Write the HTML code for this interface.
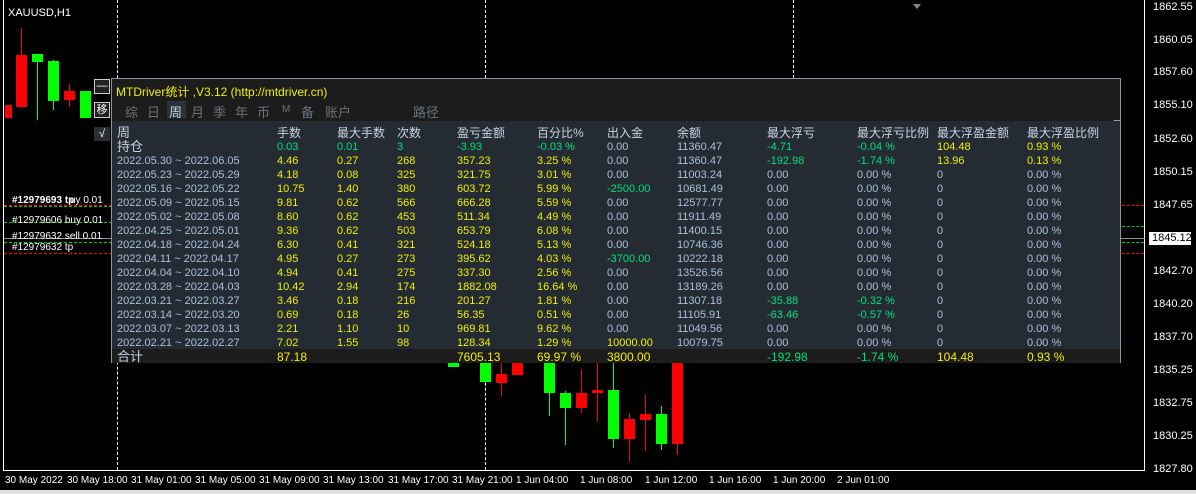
<!DOCTYPE html><html><head><meta charset="utf-8"><style>
*{margin:0;padding:0;box-sizing:border-box}
body{width:1196px;height:494px;background:#000;position:relative;overflow:hidden;font-family:"Liberation Sans","Noto Sans CJK SC",sans-serif;color:#fff}
.a{position:absolute}
.pl{position:absolute;left:1153px;font-size:11px;color:#fff}
.tl{position:absolute;top:475px;font-size:10px;color:#fff}
.c{position:absolute}
.panel{position:absolute;left:111px;top:78px;width:1010px;height:285px;background:#1c1c1c;border:1px solid #8a94a0}
.tbl{position:absolute;left:0;top:42px;width:1008px;height:228px;background:#252b33}
.r{position:absolute;left:0;height:14px;font-size:11px;line-height:14px;white-space:nowrap}
.r span{position:absolute}
.w{color:#c8d4e4}.y{color:#f0f000}.g{color:#00e07a}.b{color:#a8c0e0}
</style></head><body>
<div class="a" style="left:3px;top:0;width:1px;height:470px;background:#fff"></div>
<div class="a" style="left:3px;top:470px;width:1142px;height:1px;background:#fff"></div>
<div class="a" style="left:1144px;top:0;width:1px;height:471px;background:#fff"></div>
<div class="a" style="left:0;top:490px;width:1196px;height:4px;background:#e0e0e0"></div>
<div class="a" style="left:117px;top:0;height:470px;border-left:1px dashed #fff"></div>
<div class="a" style="left:485px;top:0;height:78px;border-left:1px dashed #fff"></div>
<div class="a" style="left:485px;top:363px;height:107px;border-left:1px dashed #fff"></div>
<div class="a" style="left:793px;top:0;height:78px;border-left:1px dashed #fff"></div>
<div class="a" style="left:913px;top:4px;width:0;height:0;border-left:4px solid transparent;border-right:4px solid transparent;border-top:5px solid #888"></div>
<div class="a" style="left:8px;top:7px;font-size:11px">XAUUSD,H1</div>
<div class="pl" style="top:1px">1862.55</div><div class="pl" style="top:34px">1860.05</div><div class="pl" style="top:66px">1857.60</div><div class="pl" style="top:99px">1855.10</div><div class="pl" style="top:133px">1852.60</div><div class="pl" style="top:166px">1850.15</div><div class="pl" style="top:199px">1847.65</div><div class="pl" style="top:265px">1842.70</div><div class="pl" style="top:298px">1840.20</div><div class="pl" style="top:331px">1837.70</div><div class="pl" style="top:364px">1835.25</div><div class="pl" style="top:397px">1832.75</div><div class="pl" style="top:430px">1830.25</div><div class="pl" style="top:463px">1827.80</div>
<div class="a" style="left:1149px;top:232px;width:42px;height:13px;background:#fff;color:#000;font-size:11px;padding-left:3px;line-height:13px">1845.12</div>
<div class="a" style="left:4px;top:238px;width:1141px;height:1px;background:#8a94a0"></div>
<div class="a" style="left:4px;top:205px;width:108px;border-top:1px dashed #f00"></div>
<div class="a" style="left:4px;top:206px;width:108px;border-top:1px dashed #0c0"></div>
<div class="a" style="left:4px;top:222px;width:108px;border-top:1px dashed #0c0"></div>
<div class="a" style="left:4px;top:242px;width:108px;border-top:1px dashed #0c0"></div>
<div class="a" style="left:4px;top:253px;width:108px;border-top:1px dashed #f00"></div>
<div class="a" style="left:1122px;top:205px;width:22px;border-top:1px dashed #f00"></div>
<div class="a" style="left:1122px;top:226px;width:22px;border-top:1px dashed #0c0"></div>
<div class="a" style="left:1122px;top:242px;width:22px;border-top:1px dashed #0c0"></div>
<div class="a" style="left:1122px;top:253px;width:22px;border-top:1px dashed #f00"></div>
<div class="a" style="left:12px;top:195px;font-size:10px;font-weight:bold">#12979693 tp</div>
<div class="a" style="left:70px;top:195px;font-size:10px">uy 0.01</div>
<div class="a" style="left:12px;top:215px;font-size:10px">#12979606 buy 0.01</div>
<div class="a" style="left:12px;top:231px;font-size:10px">#12979632 sell 0.01</div>
<div class="a" style="left:12px;top:242px;font-size:10px">#12979632 tp</div>
<div class="c" style="left:5px;top:105px;width:7px;height:13px;background:#f00"></div>
<div class="c" style="left:21px;top:28px;width:1px;height:80px;background:#f00"></div>
<div class="c" style="left:16px;top:55px;width:11px;height:52px;background:#f00"></div>
<div class="c" style="left:37px;top:54px;width:1px;height:66px;background:#0f0"></div>
<div class="c" style="left:32px;top:54px;width:11px;height:8px;background:#0f0"></div>
<div class="c" style="left:53px;top:60px;width:1px;height:50px;background:#0f0"></div>
<div class="c" style="left:48px;top:61px;width:11px;height:40px;background:#0f0"></div>
<div class="c" style="left:69px;top:84px;width:1px;height:23px;background:#f00"></div>
<div class="c" style="left:64px;top:91px;width:11px;height:9px;background:#f00"></div>
<div class="c" style="left:80px;top:91px;width:11px;height:27px;background:#0f0"></div>
<div class="c" style="left:448px;top:363px;width:11px;height:4px;background:#0f0"></div>
<div class="c" style="left:480px;top:363px;width:11px;height:19px;background:#0f0"></div>
<div class="c" style="left:501px;top:363px;width:1px;height:33px;background:#f00"></div>
<div class="c" style="left:496px;top:374px;width:11px;height:9px;background:#f00"></div>
<div class="c" style="left:512px;top:363px;width:11px;height:12px;background:#f00"></div>
<div class="c" style="left:549px;top:363px;width:1px;height:53px;background:#0f0"></div>
<div class="c" style="left:544px;top:363px;width:11px;height:30px;background:#0f0"></div>
<div class="c" style="left:565px;top:391px;width:1px;height:54px;background:#0f0"></div>
<div class="c" style="left:560px;top:393px;width:11px;height:15px;background:#0f0"></div>
<div class="c" style="left:581px;top:370px;width:1px;height:43px;background:#f00"></div>
<div class="c" style="left:576px;top:393px;width:11px;height:15px;background:#f00"></div>
<div class="c" style="left:597px;top:363px;width:1px;height:58px;background:#f00"></div>
<div class="c" style="left:592px;top:390px;width:11px;height:3px;background:#f00"></div>
<div class="c" style="left:613px;top:363px;width:1px;height:85px;background:#0f0"></div>
<div class="c" style="left:608px;top:390px;width:11px;height:49px;background:#0f0"></div>
<div class="c" style="left:629px;top:413px;width:1px;height:48px;background:#f00"></div>
<div class="c" style="left:624px;top:419px;width:11px;height:20px;background:#f00"></div>
<div class="c" style="left:645px;top:395px;width:1px;height:56px;background:#f00"></div>
<div class="c" style="left:640px;top:414px;width:11px;height:6px;background:#f00"></div>
<div class="c" style="left:661px;top:406px;width:1px;height:44px;background:#0f0"></div>
<div class="c" style="left:656px;top:414px;width:11px;height:30px;background:#0f0"></div>
<div class="c" style="left:677px;top:363px;width:1px;height:92px;background:#f00"></div>
<div class="c" style="left:672px;top:363px;width:11px;height:81px;background:#f00"></div>
<div class="tl" style="left:5px">30 May 2022</div><div class="tl" style="left:67px">30 May 18:00</div><div class="tl" style="left:131px">31 May 01:00</div><div class="tl" style="left:195px">31 May 05:00</div><div class="tl" style="left:259px">31 May 09:00</div><div class="tl" style="left:323px">31 May 13:00</div><div class="tl" style="left:388px">31 May 17:00</div><div class="tl" style="left:452px">31 May 21:00</div><div class="tl" style="left:516px">1 Jun 04:00</div><div class="tl" style="left:580px">1 Jun 08:00</div><div class="tl" style="left:645px">1 Jun 12:00</div><div class="tl" style="left:709px">1 Jun 16:00</div><div class="tl" style="left:773px">1 Jun 20:00</div><div class="tl" style="left:837px">2 Jun 01:00</div>
<div class="a" style="left:94px;top:79px;width:16px;height:15px;border:1px solid #ccc;background:#222;font-size:11px;text-align:center;line-height:13px">—</div>
<div class="a" style="left:94px;top:102px;width:16px;height:16px;border:1px solid #ccc;background:#222;font-size:11px;text-align:center;line-height:14px">移</div>
<div class="a" style="left:94px;top:127px;width:16px;height:14px;background:#2a2f36;font-size:11px;text-align:center;line-height:14px">√</div>
<div class="panel">
<div class="a" style="left:4px;top:4px;font-size:12px;color:#f0f000">MTDriver统计 ,V3.12 (http://mtdriver.cn)</div>
<div class="a" style="left:55px;top:22px;width:19px;height:17px;background:#2c323a"></div>
<div class="a" style="left:13px;top:23px;font-size:13px;color:#6c737c">
<span style="position:absolute;left:0">综</span><span style="position:absolute;left:22px">日</span><span style="position:absolute;left:44px;color:#c8d0da">周</span><span style="position:absolute;left:66px">月</span><span style="position:absolute;left:88px">季</span><span style="position:absolute;left:110px">年</span><span style="position:absolute;left:132px">币</span><span style="position:absolute;left:157px;font-size:10px;top:2px">M</span><span style="position:absolute;left:176px">备</span><span style="position:absolute;left:200px;white-space:nowrap">账户</span><span style="position:absolute;left:288px;white-space:nowrap">路径</span></div>
<div class="a" style="left:1001px;top:41px;width:0;height:0;border-left:4px solid transparent;border-right:4px solid transparent;border-top:4px solid #999"></div>
<div class="tbl"></div>
<div class="a" style="left:0;top:270px;width:1008px;height:14px;background:#1c1c1c"></div>
<div id="rows"></div>
</div>
<script>
var X=[5,165,225,285,345,425,495,565,655,745,825,915];
var d=[
["w","w","w","w","w","w","w","w","w","w","w","w","周","手数","最大手数","次数","盈亏金额","百分比%","出入金","余额","最大浮亏","最大浮亏比例","最大浮盈金额","最大浮盈比例"],
["w","g","g","g","g","g","b","b","g","g","y","y","持仓","0.03","0.01","3","-3.93","-0.03 %","0.00","11360.47","-4.71","-0.04 %","104.48","0.93 %"],
["b","y","y","y","y","y","b","b","g","g","y","y","2022.05.30 ~ 2022.06.05","4.46","0.27","268","357.23","3.25 %","0.00","11360.47","-192.98","-1.74 %","13.96","0.13 %"]];
var R=[["2022.05.23 ~ 2022.05.29","4.18","0.08","325","321.75","3.01 %","0.00","11003.24","0.00","0.00 %","0","0.00 %"],
["2022.05.16 ~ 2022.05.22","10.75","1.40","380","603.72","5.99 %","-2500.00","10681.49","0.00","0.00 %","0","0.00 %"],
["2022.05.09 ~ 2022.05.15","9.81","0.62","566","666.28","5.59 %","0.00","12577.77","0.00","0.00 %","0","0.00 %"],
["2022.05.02 ~ 2022.05.08","8.60","0.62","453","511.34","4.49 %","0.00","11911.49","0.00","0.00 %","0","0.00 %"],
["2022.04.25 ~ 2022.05.01","9.36","0.62","503","653.79","6.08 %","0.00","11400.15","0.00","0.00 %","0","0.00 %"],
["2022.04.18 ~ 2022.04.24","6.30","0.41","321","524.18","5.13 %","0.00","10746.36","0.00","0.00 %","0","0.00 %"],
["2022.04.11 ~ 2022.04.17","4.95","0.27","273","395.62","4.03 %","-3700.00","10222.18","0.00","0.00 %","0","0.00 %"],
["2022.04.04 ~ 2022.04.10","4.94","0.41","275","337.30","2.56 %","0.00","13526.56","0.00","0.00 %","0","0.00 %"],
["2022.03.28 ~ 2022.04.03","10.42","2.94","174","1882.08","16.64 %","0.00","13189.26","0.00","0.00 %","0","0.00 %"],
["2022.03.21 ~ 2022.03.27","3.46","0.18","216","201.27","1.81 %","0.00","11307.18","-35.88","-0.32 %","0","0.00 %"],
["2022.03.14 ~ 2022.03.20","0.69","0.18","26","56.35","0.51 %","0.00","11105.91","-63.46","-0.57 %","0","0.00 %"],
["2022.03.07 ~ 2022.03.13","2.21","1.10","10","969.81","9.62 %","0.00","11049.56","0.00","0.00 %","0","0.00 %"],
["2022.02.21 ~ 2022.02.27","7.02","1.55","98","128.34","1.29 %","10000.00","10079.75","0.00","0.00 %","0","0.00 %"]];
R.forEach(function(r){var c=["b","y","y","y","y","y",r[6]=="0.00"?"b":(r[6][0]=="-"?"g":"y"),"b",r[8]=="0.00"?"b":"g",r[8]=="0.00"?"b":"g","b","b"];d.push(c.concat(r));});
d.push(["w","y","y","y","y","y","y","b","g","g","y","y","合计","87.18","","","7605.13","69.97 %","3800.00","","-192.98","-1.74 %","104.48","0.93 %"]);
var h="";d.forEach(function(r,i){var last=i==d.length-1;var t=last?271:47+i*14;h+='<div class="r" style="top:'+t+'px;'+(i==0||last?'font-size:12px;':'')+'">';for(var k=0;k<12;k++){var fs=(k==0&&(i<2||last))?'font-size:13px;':'';h+='<span class="'+r[k]+'" style="left:'+X[k]+'px;'+fs+'">'+r[12+k]+'</span>';}h+='</div>';});
document.getElementById("rows").innerHTML=h;
</script>
</body></html>
